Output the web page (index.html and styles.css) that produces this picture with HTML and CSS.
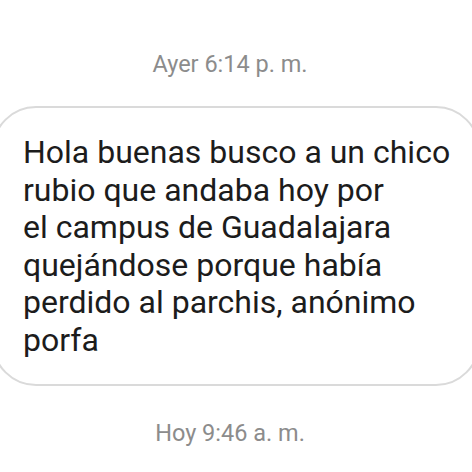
FILE: index.html
```html
<!DOCTYPE html>
<html lang="es">
<head>
<meta charset="utf-8">
<link rel="stylesheet" href="styles.css">
</head>
<body>
<div class="chat">
  <div class="stamp stamp-top">Ayer 6:14 p. m.</div>
  <div class="bubble">
    <p class="msg">Hola buenas busco a un chico<br>rubio que andaba hoy por<br>el campus de Guadalajara<br>quejándose porque había<br>perdido al parchis, anónimo<br>porfa</p>
  </div>
  <div class="stamp stamp-bottom">Hoy 9:46 a. m.</div>
</div>
</body>
</html>
```
FILE: styles.css
```css
html, body {
  margin: 0;
  padding: 0;
  background: #ffffff;
}
body {
  width: 472px;
  height: 472px;
  overflow: hidden;
  font-family: Roboto, "Noto Sans", sans-serif;
}
.chat {
  display: flex;
  flex-direction: column;
}
.stamp {
  text-align: center;
  color: #8c8c8c;
  font-size: 23.5px;
  line-height: 28px;
  padding-right: 12px;
}
.stamp-top {
  margin-top: 50px;
}
.bubble {
  margin-top: 28px;
  margin-left: -8px;
  width: 488px;
  box-sizing: border-box;
  height: 280px;
  border: 2px solid #dadada;
  border-radius: 44px;
  padding: 26px 0 0 29px;
}
.msg {
  margin: 0;
  color: #1c1c1c;
  font-size: 32px;
  line-height: 37.6px;
  white-space: nowrap;
}
.stamp-bottom {
  margin-top: 33px;
}
```
